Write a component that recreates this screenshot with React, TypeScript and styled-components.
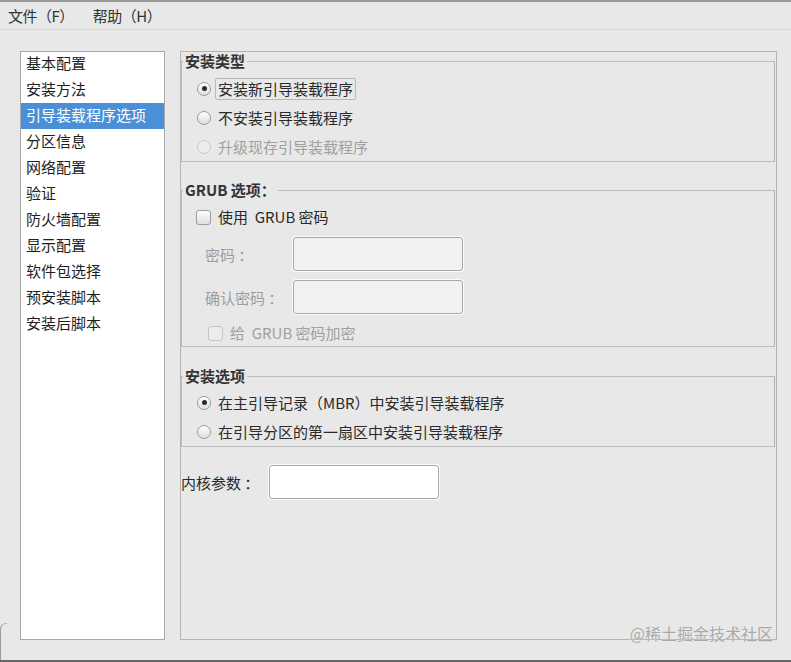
import React from 'react';
import styled, { createGlobalStyle } from 'styled-components';

const GlobalStyle = createGlobalStyle`
  html, body {
    margin: 0;
    padding: 0;
    background: #e8e8e8;
  }
  body {
    font-family: "Noto Sans CJK SC", "DejaVu Sans", sans-serif;
    font-size: 15px;
    color: #2e2e2e;
  }
`;

const Window = styled.div`
  position: relative;
  width: 791px;
  height: 662px;
  box-sizing: border-box;
  border-top: 2px solid #9a9a9a;
  border-bottom: 2px solid #666;
  display: flex;
  flex-direction: column;
  overflow: hidden;
`;

const MenuBar = styled.div`
  height: 27px;
  display: flex;
  align-items: center;
  gap: 19px;
  padding-left: 8px;
  border-bottom: 1px solid #d8d8d8;
`;

const MenuItem = styled.span`
  line-height: 27px;
  color: #333;
  letter-spacing: -0.5px;
`;

const Body = styled.div`
  display: flex;
  align-items: flex-start;
  gap: 15px;
  padding: 21px 14px 0 20px;
`;

const Sidebar = styled.ul`
  list-style: none;
  margin: 0;
  padding: 0;
  width: 145px;
  height: 589px;
  box-sizing: border-box;
  border: 1px solid #a8a8a8;
  background: #fff;
`;

const SideItem = styled.li<{ $active?: boolean }>`
  height: 26px;
  line-height: 23px;
  padding-left: 5px;
  white-space: nowrap;
  color: ${(p) => (p.$active ? '#fff' : '#1e1e1e')};
  background: ${(p) => (p.$active ? '#4a90d9' : 'transparent')};

  &:first-child {
    margin-top: -1px;
  }
`;

const Panel = styled.div`
  width: 597px;
  height: 589px;
  box-sizing: border-box;
  border: 1px solid #b4b4b4;
`;

const Frame = styled.fieldset<{ $top?: number }>`
  margin: ${(p) => p.$top ?? 0}px 1px 0 0;
  padding: 0;
  min-width: 0;
  border: 1px solid #bcbcbc;
  border-right-color: #b0b0b0;
`;

const Legend = styled.legend`
  padding: 0 2px;
  margin-left: 1px;
  font-weight: bold;
  line-height: 18px;
  color: #333;
`;

const FrameBody = styled.div<{ $pad: number }>`
  padding-top: ${(p) => p.$pad}px;
`;

const OptionRow = styled.div<{ $height?: number; $indent?: number; $top?: number }>`
  display: flex;
  align-items: center;
  height: ${(p) => p.$height ?? 29}px;
  margin-top: ${(p) => p.$top ?? 0}px;
  padding-left: ${(p) => p.$indent ?? 15}px;
  gap: 5px;
`;

const Radio = styled.span<{ $checked?: boolean; $disabled?: boolean }>`
  position: relative;
  width: 14px;
  height: 14px;
  box-sizing: border-box;
  border-radius: 50%;
  border: 1px solid ${(p) => (p.$disabled ? '#cacaca' : '#9a9a9a')};
  background: ${(p) =>
    p.$disabled ? '#ececec' : 'linear-gradient(#fdfdfd, #dedede)'};
  flex: none;

  &::after {
    content: '';
    display: ${(p) => (p.$checked ? 'block' : 'none')};
    position: absolute;
    left: 3.5px;
    top: 3.5px;
    width: 5px;
    height: 5px;
    border-radius: 50%;
    background: #2a2a2a;
  }
`;

const Check = styled.span<{ $disabled?: boolean }>`
  width: 15px;
  height: 15px;
  box-sizing: border-box;
  border-radius: 3px;
  border: 1px solid ${(p) => (p.$disabled ? '#c6c6c6' : '#9c9c9c')};
  background: ${(p) =>
    p.$disabled ? '#ececec' : 'linear-gradient(#fdfdfd, #e0e0e0)'};
  flex: none;
`;

const OptionText = styled.span<{ $disabled?: boolean; $focused?: boolean }>`
  white-space: pre;
  line-height: 20px;
  padding: 0 2px;
  border: 1px solid ${(p) => (p.$focused ? '#b8b8b8' : 'transparent')};
  border-radius: 2px;
  margin-left: -1px;
  color: ${(p) => (p.$disabled ? '#a0a0a0' : '#2a2a2a')};
`;

const FieldRow = styled.div<{ $top?: number; $indent?: number }>`
  display: flex;
  align-items: center;
  margin-top: ${(p) => p.$top ?? 0}px;
  padding-left: ${(p) => p.$indent ?? 0}px;
`;

const FieldLabel = styled.span<{ $disabled?: boolean }>`
  width: 88px;
  flex: none;
  white-space: pre;
  color: ${(p) => (p.$disabled ? '#9c9c9c' : '#2a2a2a')};
`;

const TextBox = styled.div<{ $disabled?: boolean }>`
  width: 170px;
  height: 34px;
  box-sizing: border-box;
  border: 1px solid #a8a8a8;
  border-radius: 3px;
  background: ${(p) => (p.$disabled ? '#f1f1f1' : '#fff')};
  box-shadow: 0 0 0 1px #fbfbfb;
`;

const Watermark = styled.div`
  position: absolute;
  right: 18px;
  bottom: 18px;
  font-size: 16px;
  line-height: 18px;
  color: #a9a9a9;
  text-shadow: 0 0 1px #f4f4f4;
`;

const CornerMark = styled.div`
  position: absolute;
  left: 0;
  bottom: 0;
  width: 6px;
  height: 36px;
  border-left: 1px solid #9a9a9a;
  border-top: 1px solid #b0b0b0;
  border-top-left-radius: 6px;
`;

const pages = [
  '基本配置',
  '安装方法',
  '引导装载程序选项',
  '分区信息',
  '网络配置',
  '验证',
  '防火墙配置',
  '显示配置',
  '软件包选择',
  '预安装脚本',
  '安装后脚本',
];

export default function App() {
  return (
    <>
      <GlobalStyle />
      <Window>
        <MenuBar>
          <MenuItem>文件（F）</MenuItem>
          <MenuItem>帮助（H）</MenuItem>
        </MenuBar>
        <Body>
          <Sidebar>
            {pages.map((p) => (
              <SideItem key={p} $active={p === '引导装载程序选项'}>
                {p}
              </SideItem>
            ))}
          </Sidebar>
          <Panel>
            <Frame>
              <Legend>安装类型</Legend>
              <FrameBody $pad={4}>
                <OptionRow>
                  <Radio $checked />
                  <OptionText $focused>安装新引导装载程序</OptionText>
                </OptionRow>
                <OptionRow>
                  <Radio />
                  <OptionText>不安装引导装载程序</OptionText>
                </OptionRow>
                <OptionRow>
                  <Radio $disabled />
                  <OptionText $disabled>升级现存引导装载程序</OptionText>
                </OptionRow>
              </FrameBody>
            </Frame>

            <Frame $top={19}>
              <Legend>GRUB 选项：</Legend>
              <FrameBody $pad={5}>
                <OptionRow $height={26} $indent={14}>
                  <Check />
                  <OptionText>使用  GRUB 密码</OptionText>
                </OptionRow>
                <FieldRow $top={7} $indent={23}>
                  <FieldLabel $disabled>密码 ：</FieldLabel>
                  <TextBox $disabled />
                </FieldRow>
                <FieldRow $top={9} $indent={23}>
                  <FieldLabel $disabled>确认密码 ：</FieldLabel>
                  <TextBox $disabled />
                </FieldRow>
                <OptionRow $height={26} $indent={26} $top={6}>
                  <Check $disabled />
                  <OptionText $disabled>给  GRUB 密码加密</OptionText>
                </OptionRow>
              </FrameBody>
            </Frame>

            <Frame $top={20}>
              <Legend>安装选项</Legend>
              <FrameBody $pad={3}>
                <OptionRow>
                  <Radio $checked />
                  <OptionText>在主引导记录（MBR）中安装引导装载程序</OptionText>
                </OptionRow>
                <OptionRow>
                  <Radio />
                  <OptionText>在引导分区的第一扇区中安装引导装载程序</OptionText>
                </OptionRow>
              </FrameBody>
            </Frame>

            <FieldRow $top={18}>
              <FieldLabel>内核参数 ：</FieldLabel>
              <TextBox />
            </FieldRow>
          </Panel>
        </Body>
        <Watermark>@稀土掘金技术社区</Watermark>
        <CornerMark />
      </Window>
    </>
  );
}
